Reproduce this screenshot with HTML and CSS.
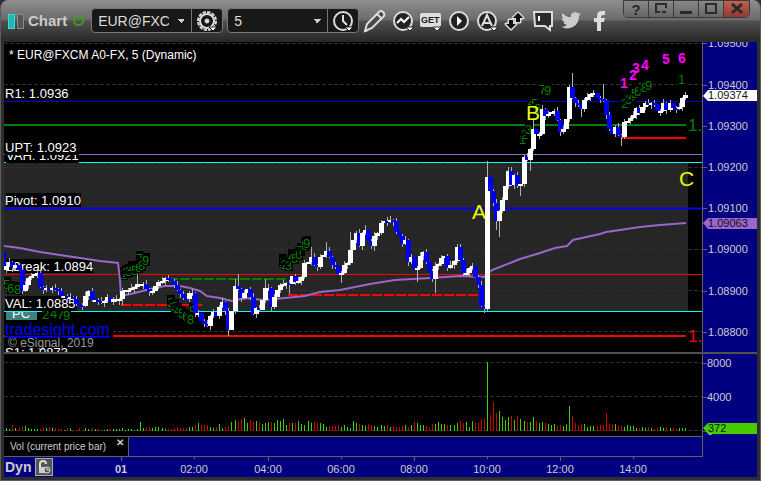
FILE: index.html
```html
<!DOCTYPE html>
<html lang="en">
<head>
    <meta charset="UTF-8">
    <meta name="viewport" content="width=device-width, initial-scale=1.0">
    <title>Chart - EUR@FXCM A0-FX</title>
    <link rel="stylesheet" href="styles.css">
</head>
<body>
    <div class="window">
        <!-- Title bar -->
        <header class="toolbar">
            <span class="link-bar on"></span>
            <span class="link-bar"></span>
            <h1>Chart</h1>
            <span class="status"></span>

            <div class="combo">
                <select aria-label="Symbol"><option>EUR@FXCM A0-FX</option></select>
                <button aria-label="Symbol settings">
                    <svg width="24" height="24" viewBox="0 0 24 24" fill="none" stroke="#ddd">
                        <circle cx="12" cy="12" r="9" stroke-width="2" stroke-dasharray="3.4 1.3"/>
                        <circle cx="12" cy="12" r="7" stroke-width="2"/>
                        <circle cx="12" cy="12" r="2" fill="#ddd"/>
                        <path d="M14 18h8l-4 4z" fill="#fff" stroke="#181818"/>
                    </svg>
                </button>
            </div>
            <div class="combo">
                <select aria-label="Interval"><option>5</option></select>
                <button aria-label="Time template">
                    <svg width="24" height="24" viewBox="0 0 24 24" fill="none" stroke="#ddd" stroke-width="2">
                        <circle cx="12" cy="12" r="9"/>
                        <path d="M12 6v6l4 4"/>
                        <path d="M14 18h8l-4 4z" fill="#fff" stroke="#181818" stroke-width="1"/>
                    </svg>
                </button>
            </div>

            <nav class="tools">
                <button aria-label="Draw">
                    <svg width="24" height="24" viewBox="0 0 24 24" fill="#484848" stroke="#ddd" stroke-width="2">
                        <path d="M2 22l2-7L16 3q2-2 4 0t1 4L9 19z"/>
                        <path d="M14 5l5 5M2 22l3-1"/>
                    </svg>
                </button>
                <button aria-label="Studies">
                    <svg width="24" height="24" viewBox="0 0 24 24" fill="none" stroke="#ddd" stroke-width="2">
                        <circle cx="12" cy="12" r="9" fill="#222"/>
                        <path d="M6 14l4-4 3 3 5-5" stroke="#fff" stroke-width="2"/>
                        <path d="M15 18h8l-4 4z" fill="#fff" stroke="#222" stroke-width="1"/>
                    </svg>
                </button>
                <button aria-label="Get studies">
                    <svg width="24" height="24" viewBox="0 0 24 24">
                        <rect x="1" y="4" width="21" height="14" rx="2" fill="#ddd"/>
                        <text x="2" y="14" class="get">GET</text>
                        <path d="M14 18h8l-4 4z" fill="#fff" stroke="#333"/>
                    </svg>
                </button>
                <button aria-label="Playback">
                    <svg width="24" height="24" viewBox="0 0 24 24" fill="#222" stroke="#ddd" stroke-width="2">
                        <circle cx="12" cy="12" r="9"/>
                        <path d="M10 7l5 5-5 5z" fill="#fff" stroke="none"/>
                    </svg>
                </button>
                <button aria-label="Alerts">
                    <svg width="24" height="24" viewBox="0 0 24 24" fill="#222" stroke="#ddd" stroke-width="2">
                        <circle cx="12" cy="12" r="9"/>
                        <path d="M7 17l5-11 5 11M9 14h6" fill="none"/>
                        <path d="M15 18h8l-4 4z" fill="#fff" stroke="#222" stroke-width="1"/>
                    </svg>
                </button>
                <button aria-label="Trade">
                    <svg width="24" height="24" viewBox="0 0 24 24" fill="#111" stroke="#ddd" stroke-width="3" stroke-linejoin="round" paint-order="stroke">
                        <path d="M15 4l5 5h-3v4h-4V9h-3z"/>
                        <path d="M8 20l-5-5h3v-4h4v4h3z"/>
                        <path d="M15 4l5 5h-3v4h-4V9h-3z" stroke="none"/>
                    </svg>
                </button>
                <button aria-label="Notes">
                    <svg width="24" height="24" viewBox="0 0 24 24" fill="#2b2b2b" stroke="#ddd" stroke-width="2">
                        <path d="M3 3h18v14h-2v4l-5-4H4z"/>
                        <path d="M8 7v5" stroke="#fff"/>
                    </svg>
                </button>
                <button aria-label="Twitter">
                    <svg width="24" height="24" viewBox="0 0 24 24" fill="#ccc">
                        <path d="M22 5c-.8.4-1.500.6-2.300.7.8-.5 1.500-1.300 1.800-2.200-.8.500-1.700.8-2.600 1a4.100 4.100 0 0 0-7 3.700C8.500 8 5.500 6.400 3.400 3.900c-1 1.900-.6 4.200 1.300 5.500-.7 0-1.300-.2-1.900-.5 0 2 1.400 3.700 3.300 4.100-.6.200-1.200.2-1.900.1.500 1.600 2 2.800 3.900 2.800A8.300 8.300 0 0 1 2 17.600 11.700 11.700 0 0 0 20 7.100c.8-.6 1.500-1.300 2-2.100z"/>
                    </svg>
                </button>
                <button aria-label="Facebook">
                    <svg width="24" height="24" viewBox="0 0 24 24" fill="#ddd">
                        <path d="M10 22v-9H7V9h3V7q0-5 5-5h3v4h-2q-2 0-2 2v1h4l-1 4h-3v9z"/>
                    </svg>
                </button>
            </nav>

            <div class="window-buttons">
                <button aria-label="Help">?</button>
                <button aria-label="Dock">
                    <svg width="14" height="12" viewBox="0 0 14 12" fill="none" stroke="#2a2a2a" stroke-width="2">
                        <path d="M6 9H2V1h10v4"/><path d="M7 8h6l-3 3z" fill="#2a2a2a" stroke="none"/>
                    </svg>
                </button>
                <button aria-label="Minimize">
                    <svg width="14" height="12" viewBox="0 0 14 12"><path d="M1 8h12v3H1z" fill="#2a2a2a"/></svg>
                </button>
                <button aria-label="Maximize">
                    <svg width="14" height="12" viewBox="0 0 14 12"><path d="M2 1h10v9H2z" fill="none" stroke="#2a2a2a" stroke-width="2"/></svg>
                </button>
                <button class="close" aria-label="Close">
                    <svg width="14" height="12" viewBox="0 0 14 12"><path d="M2 1l10 9M12 1L2 10" stroke="#2a2a2a" stroke-width="3"/></svg>
                </button>
            </div>
        </header>

        <main>
            <!-- Price pane -->
            <svg class="pane" viewBox="4 42 753 310">
                <rect x="4" y="42" width="753" height="310" fill="#000"/>
                <rect x="4" y="163" width="684" height="148" fill="#262626"/>
                <g class="grid">
                    <path d="M4 43.500H702M4 84.500H702M4 167.500H702M4 208.500H702M4 249.500H702M4 290.500H702M4 331.500H702"/>
                </g>
                <g class="levels">
                    <path d="M4 101.500H702" stroke="#0000dd"/>
                    <path d="M4 125H686" stroke="#008000" stroke-width="2"/>
                    <path d="M4 154.500H702" stroke="#9966cc"/>
                    <path d="M4 162.500H702M4 311.500H702" stroke="#00ffff"/>
                    <path d="M4 208.500H702" stroke="#0000ff" stroke-width="2"/>
                    <path d="M4 274.500H702" stroke="#ff0000"/>
                    <path d="M4 336H686M622 138H686" stroke="#ff0000" stroke-width="2"/>
                    <path d="M121 305H202M288 295H480" stroke="#ff0000" stroke-width="2" stroke-dasharray="10 2"/>
                    <path d="M168 279H288" stroke="#008000" stroke-width="2" stroke-dasharray="10 2"/>
                </g>
                <g id="counts"></g>
                <g class="labels">
                    <rect x="6" y="86" width="64" height="14"/>
                    <rect x="6" y="154" width="73" height="9"/>
                    <text x="6" y="160">VAH: 1.0921</text>
                    <rect x="5" y="140" width="73" height="15"/>
                    <rect x="6" y="193" width="75" height="14"/>
                    <rect x="5" y="259" width="88" height="14"/>
                    <rect x="5" y="296" width="72" height="15"/>
                    <text x="5" y="98">R1: 1.0936</text>
                    <text x="5" y="152">UPT: 1.0923</text>
                    <text x="5" y="205">Pivot: 1.0910</text>
                    <text x="5" y="271">LBreak: 1.0894</text>
                    <text x="5" y="308">VAL: 1.0885</text>
                    <rect x="6" y="312" width="31" height="8" class="pc"/>
                    <svg x="4" y="312" width="40" height="8" viewBox="4 312 40 8"><text x="12" y="318">PC</text></svg>
                    <rect x="5" y="321" width="108" height="17"/>
                    <text x="8" y="347" class="copyright">© eSignal, 2019</text>
                    <text x="5" y="357">S1: 1.0873</text>
                    <text x="9" y="59" class="title">* EUR@FXCM A0-FX, 5 (Dynamic)</text>
                </g>
                <a href="#"><text x="5" y="335" class="site">tradesight.com</text></a>
                <polyline class="average" points="4,246 20,248 40,252 60,255 80,258 100,261 118,263 120,280 121,296 135,293 150,289 165,286 180,286 190,288 200,291 207,296 220,298 232,301 245,298 265,300 285,298 305,296 320,292 340,290 350,288 370,284 395,280 430,278 460,276 484,277 492,270 500,267 520,259 540,253 555,248 567,246 573,240 600,234 606,232 620,230 640,227 660,225 686,223"/>
                <g id="candles"></g>
                <g class="waves">
                    <text x="620" y="88">1</text>
                    <text x="629" y="80">2</text>
                    <text x="632" y="73">3</text>
                    <text x="641" y="70">4</text>
                    <text x="662" y="64">5</text>
                    <text x="678" y="63">6</text>
                </g>
                <g class="marks">
                    <text x="472" y="219">A</text>
                    <text x="526" y="120">B</text>
                    <text x="679" y="186">C</text>
                </g>
                <g class="edge">
                    <text x="688" y="131" fill="#008000">1.</text>
                    <text x="688" y="342" fill="#ff0000">1.</text>
                </g>
                <rect x="702" y="42" width="55" height="310" class="scale"/>
                <path class="tick" d="M702.500 42V352M703 43.500h4M703 85.500h4M703 126.500h4M703 167.500h4M703 208.500h4M703 249.500h4M703 291.500h4M703 332.500h4"/>
                <g class="scale-text">
                    <text x="708" y="47">1.09500</text>
                    <text x="708" y="89">1.09400</text>
                    <text x="708" y="130">1.09300</text>
                    <text x="708" y="171">1.09200</text>
                    <text x="708" y="212">1.09100</text>
                    <text x="708" y="253">1.09000</text>
                    <text x="708" y="295">1.08900</text>
                    <text x="708" y="336">1.08800</text>
                    <path d="M703 96l5-6h49v11h-49z" fill="#fff"/>
                    <text x="708" y="99" class="dark">1.09374</text>
                    <path d="M703 223l5-5h49v11h-49z" fill="#9966cc"/>
                    <text x="708" y="227" class="dark">1.09063</text>
                </g>
            </svg>

            <!-- Volume pane -->
            <svg class="pane volume" viewBox="4 354 753 82">
                <rect x="4" y="354" width="753" height="82" fill="#000"/>
                <g class="grid"><path d="M4 362.500H702M4 396.500H702M4 430.500H702"/></g>
                <g id="volume"></g>
                <rect x="702" y="354" width="55" height="82" class="scale"/>
                <path class="tick" d="M702.500 354V436M703 363.500h4M703 397.500h4M703 431.500h4"/>
                <g class="scale-text">
                    <text x="707" y="367">8000</text>
                    <text x="707" y="401">4000</text>
                    <text x="707" y="435">0</text>
                    <path d="M703 428l5-5h49v11h-49z" fill="#44cc00"/>
                    <text x="708" y="432" class="dark">372</text>
                </g>
            </svg>

            <div class="tab-row">
                <div class="tabs">
                    <div class="tab">Vol (current price bar)<button aria-label="Close tab">✕</button></div>
                </div>
            </div>

            <!-- Time axis -->
            <footer>
                <div class="dyn">
                    <span>Dyn</span>
                    <button aria-label="Lock time">
                        <svg width="16" height="16" viewBox="0 0 16 16" fill="none" stroke="#ddd" stroke-width="2">
                            <path d="M4 8V5q0-3 3-3t3 3"/>
                            <path d="M3 8h7v6H3z" fill="#ccc" stroke="none"/>
                            <circle cx="11" cy="11" r="3" fill="#555" stroke-width="1"/>
                            <path d="M11 9v2h2" stroke-width="1"/>
                        </svg>
                    </button>
                </div>
                <svg class="times" viewBox="64 457 693 20">
                    <path class="tick" d="M121.500 457v4M194.500 457v2M268.500 457v4M341.500 457v2M414.500 457v4M487.500 457v2M560.500 457v4M633.500 457v2"/>
                    <g class="scale-text">
                        <text x="121" y="473" class="day">01</text>
                        <text x="194" y="473">02:00</text>
                        <text x="268" y="473">04:00</text>
                        <text x="341" y="473">06:00</text>
                        <text x="414" y="473">08:00</text>
                        <text x="487" y="473">10:00</text>
                        <text x="560" y="473">12:00</text>
                        <text x="633" y="473">14:00</text>
                    </g>
                </svg>
            </footer>
        </main>
    </div>
    <script src="chart.js"></script>
</body>
</html>
```

FILE: styles.css
```css
* {
    box-sizing: border-box;
}
body {
    margin: 0;
    background-color: #2e2e2e;
    font-family: "Liberation Sans", Arial, sans-serif;
}
button {
    padding: 0;
    border: 0;
    background: none;
    color: inherit;
    font-family: inherit;
    cursor: pointer;
}
svg {
    display: block;
}
.window {
    border: 1px solid #5c5c5c;
    border-top: 0;
    border-radius: 8px 8px 0 0;
    padding: 0 3px 3px;
    overflow: hidden;
}
.toolbar {
    display: flex;
    align-items: center;
    position: relative;
    height: 42px;
    margin: 0 -3px;
    padding: 0 8px 1px 7px;
    background: linear-gradient(#8e8e8e 0, #6a6a6a 20px, #505050 21px, #2b2b2b 40px);
}
.link-bar {
    width: 7px;
    height: 15px;
    margin: 2px 2px 0 0;
    border: 1px solid #888;
    background-color: #555;
}
.link-bar.on {
    border-color: #33ddd5;
    background-color: #22b8b0;
}
h1 {
    margin: 0 6px 0 2px;
    color: #ccc;
    font-size: 15px;
}
.status {
    width: 11px;
    height: 11px;
    margin-right: 7px;
    border: 2px solid #3aa010;
    border-radius: 50%;
}
.combo {
    display: flex;
    width: 132px;
    height: 25px;
    margin-right: 4px;
    border: 1px solid #777;
    border-radius: 4px;
    background-color: #181818;
}
.combo select {
    flex: 1;
    min-width: 0;
    padding: 0 22px 0 6px;
    border: 0;
    appearance: none;
    background: conic-gradient(from -45deg at 50% 100%, #ccc 90deg, transparent 0) right 6px center / 8px 4px no-repeat;
    color: #ddd;
    font-family: inherit;
    font-size: 14px;
}
.combo button {
    width: 31px;
    padding-left: 3px;
    border-left: 1px solid #777;
}
.tools {
    display: flex;
    gap: 4px;
}
.get {
    fill: #222;
    font-size: 9px;
    font-weight: bold;
}
.window-buttons {
    display: flex;
    position: absolute;
    top: 0;
    right: 10px;
    height: 18px;
    border: 1px solid #3a3a3a;
    border-radius: 0 0 5px 5px;
    overflow: hidden;
}
.window-buttons button {
    display: flex;
    align-items: center;
    justify-content: center;
    width: 25px;
    border-right: 1px solid #3a3a3a;
    background: linear-gradient(#888, #666);
    color: #2a2a2a;
    font-size: 15px;
    font-weight: bold;
}
.window-buttons .close {
    border-right: 0;
    background: linear-gradient(#c06050, #903a30);
}
.pane {
    width: 100%;
    height: auto;
}
.volume {
    margin-top: 2px;
    outline: 2px solid #505050;
    clip-path: inset(-2px 0 0 0);
}
.grid path {
    fill: none;
    stroke: #303030;
    stroke-dasharray: 4 2;
}
.levels path {
    fill: none;
}
.average {
    fill: none;
    stroke: #9966cc;
    stroke-width: 2;
}
.labels {
    font-size: 13px;
}
.labels text {
    fill: #fff;
}
.labels .pc {
    fill: #3f8080;
}
.labels .title {
    font-size: 12px;
}
.labels .copyright {
    fill: #999;
    font-size: 12px;
}
.site {
    fill: #0000ff;
    font-size: 16px;
    text-decoration: underline;
}
.waves {
    fill: #ff00ff;
    font-size: 14px;
    font-weight: bold;
}
.marks {
    fill: #e6ff00;
    font-size: 21px;
}
.edge {
    font-size: 17px;
}
.count {
    fill: #008000;
    font-size: 13px;
}
.scale {
    fill: #000080;
}
.tick {
    fill: none;
    stroke: #606060;
}
.scale-text {
    fill: #ccc;
    font-size: 11px;
}
.scale-text .dark {
    fill: #111;
}
.wick {
    stroke: #b0b0b0;
}
.up {
    fill: #fff;
}
.down {
    fill: #0000ee;
}
.vol-up {
    fill: #3cd000;
}
.vol-down {
    fill: #d00000;
}
.tab-row {
    display: grid;
    grid-template-columns: 699fr 54fr;
    height: 21px;
    background-color: #000080;
}
.tabs {
    border: 1px solid #606060;
    border-left: 0;
}
.tab {
    display: flex;
    justify-content: space-between;
    width: 125px;
    height: 19px;
    padding: 0 4px 0 6px;
    border-right: 1px solid #606060;
    background-color: #000;
    color: #ccc;
    font-size: 10px;
    line-height: 20px;
    white-space: nowrap;
}
.tab button {
    height: 12px;
    font-size: 10px;
    font-weight: bold;
    line-height: 12px;
}
footer {
    display: flex;
    background-color: #000080;
}
.dyn {
    display: flex;
    align-items: center;
    gap: 4px;
    width: 60px;
    padding-left: 1px;
    color: #ccc;
    font-size: 14px;
    font-weight: bold;
}
.dyn button {
    border: 1px solid #aaa;
    background-color: #555;
}
.times {
    flex: 1;
    text-anchor: middle;
}
.day {
    font-weight: bold;
}
```

FILE: chart.js
```js
const NS = 'http://www.w3.org/2000/svg';
const STEP = 3.042;
const barX = i => Math.round(487 + (i - 159) * STEP);

// close of each 5 minute bar, each bar opens at the close before it
const closes = [
    270, 266, 262, 268, 265, 270, 291, 285, 278, 276, 274, 273, 287, 290, 288, 290, 288, 289, 291, 296,
    296, 298, 297, 299, 304, 305, 306, 296, 291, 300, 300, 301, 302, 301, 297, 302, 299, 299, 299, 291,
    290, 290, 288, 287, 284, 284, 284, 289, 292, 291, 286, 282, 281, 278, 279, 281, 285, 290, 294, 298,
    299, 293, 293, 313, 313, 321, 324, 326, 316, 312, 316, 307, 302, 311, 330, 311, 286, 289, 298, 293,
    289, 297, 314, 308, 310, 300, 288, 288, 307, 297, 290, 285, 284, 283, 284, 276, 282, 281, 277, 263,
    262, 257, 265, 267, 257, 255, 251, 257, 265, 266, 274, 273, 265, 263, 250, 240, 233, 246, 233, 230,
    241, 246, 236, 233, 223, 221, 222, 220, 221, 232, 236, 244, 240, 262, 257, 269, 268, 256, 252, 262,
    271, 279, 266, 264, 258, 256, 268, 265, 261, 247, 260, 273, 273, 268, 266, 277, 285, 306, 309, 177,
    191, 203, 221, 211, 200, 186, 171, 185, 175, 186, 184, 157, 160, 149, 129, 134, 134, 109, 116, 114,
    112, 111, 120, 132, 129, 119, 87, 98, 103, 104, 109, 100, 97, 94, 93, 98, 99, 100, 115, 129,
    134, 127, 135, 137, 122, 121, 118, 115, 108, 113, 107, 103, 105, 103, 104, 111, 111, 103, 110, 103,
    108, 109, 107, 98, 95
];
// bars with a long wick
const highs = { 11: 270, 44: 274, 76: 279, 77: 274, 86: 279, 101: 247, 106: 242, 114: 232, 119: 225, 126: 217, 150: 244, 159: 161, 166: 167, 174: 118, 187: 73, 197: 84 };
const lows = { 39: 305, 74: 336, 94: 294, 111: 283, 122: 251, 136: 282, 142: 293, 158: 313, 162: 230, 163: 237, 170: 196, 173: 171, 190: 117, 203: 146 };

const volumes = [
    2, 3, 2, 6, 3, 3, 4, 5, 3, 2, 2, 2, 2, 3, 3, 4, 3, 3, 2, 2,
    1, 3, 3, 1, 1, 3, 1, 3, 2, 3, 2, 2, 1, 1, 2, 2, 2, 2, 2, 3,
    1, 2, 2, 1, 2, 9, 3, 3, 4, 3, 4, 4, 3, 2, 2, 2, 3, 4, 3, 3,
    3, 4, 4, 6, 8, 6, 6, 6, 4, 3, 4, 7, 3, 4, 5, 9, 11, 9, 12, 13,
    8, 11, 9, 10, 9, 7, 8, 9, 9, 8, 11, 10, 12, 6, 8, 8, 8, 10, 7, 6,
    10, 8, 9, 8, 8, 7, 4, 5, 5, 5, 6, 4, 6, 4, 3, 10, 8, 7, 6, 5,
    7, 6, 5, 4, 6, 5, 6, 4, 5, 4, 4, 5, 6, 4, 6, 9, 8, 6, 6, 5,
    3, 7, 7, 9, 7, 7, 6, 6, 6, 8, 10, 8, 9, 4, 10, 8, 8, 12, 13, 69,
    16, 29, 18, 20, 14, 11, 14, 15, 11, 15, 12, 10, 9, 9, 14, 10, 8, 9, 8, 7,
    6, 7, 5, 6, 5, 7, 25, 15, 8, 6, 7, 7, 4, 5, 5, 5, 6, 6, 18, 7,
    7, 7, 5, 5, 4, 6, 5, 5, 3, 3, 4, 3, 4, 3, 2, 3, 4, 3, 4, 3,
    3, 2, 3, 3, 3
];

// bar counts: digit, x, baseline
const counts = [
    ['5', 3, 289], ['6', 7, 293], ['8', 14, 294],
    ['1', 120, 279], ['2', 122, 277], ['3', 125, 276], ['4', 128, 273], ['5', 131, 275], ['6', 135, 272], ['7', 136, 263], ['8', 138, 270], ['9', 142, 265],
    ['2', 167, 307], ['3', 171, 311], ['4', 174, 315], ['5', 178, 318], ['6', 182, 321], ['7', 185, 323], ['9', 189, 315], ['8', 187, 324],
    ['2', 42, 319], ['4', 50, 318], ['7', 57, 319], ['9', 63, 320],
    ['1', 279, 266], ['2', 281, 269], ['3', 285, 270], ['4', 288, 261], ['5', 291, 263], ['6', 295, 259], ['7', 297, 255], ['8', 301, 250], ['9', 303, 248],
    ['1', 519, 144], ['2', 521, 139], ['3', 525, 134], ['4', 528, 107], ['5', 531, 108], ['6', 534, 113], ['7', 539, 94], ['9', 544, 95],
    ['2', 621, 108], ['3', 625, 104], ['4', 628, 101], ['5', 631, 98], ['6', 634, 96], ['7', 638, 92], ['8', 641, 92], ['9', 645, 90],
    ['1', 678, 84]
];

function add(parent, name, attrs, text) {
    const el = document.createElementNS(NS, name);
    for (const key in attrs) el.setAttribute(key, attrs[key]);
    if (text) el.textContent = text;
    parent.appendChild(el);
}

function drawCounts() {
    const group = document.getElementById('counts');
    counts.forEach(([digit, x, y]) => {
        add(group, 'rect', { x: x, y: y - 12, width: 8, height: 13 });
        add(group, 'text', { x: x, y: y, class: 'count' }, digit);
    });
}

function drawBars() {
    const candles = document.getElementById('candles');
    const volume = document.getElementById('volume');
    closes.forEach((close, i) => {
        const open = i ? closes[i - 1] : 252;
        const x = barX(i);
        const top = Math.min(open, close);
        const bottom = Math.max(open, close, top + 2);
        const high = highs[i] || top - (i * 7) % 5;
        const low = lows[i] || bottom + (i * 3) % 5;
        const up = close <= open;
        add(candles, 'path', { class: 'wick', d: `M${x + 0.5} ${high}V${low}` });
        add(candles, 'rect', { class: up ? 'up' : 'down', x: x - 2, y: top, width: 5, height: bottom - top });
        add(volume, 'rect', { class: up ? 'vol-up' : 'vol-down', x: x, y: 431 - volumes[i], width: 1, height: volumes[i] });
    });
}

drawCounts();
drawBars();
```
